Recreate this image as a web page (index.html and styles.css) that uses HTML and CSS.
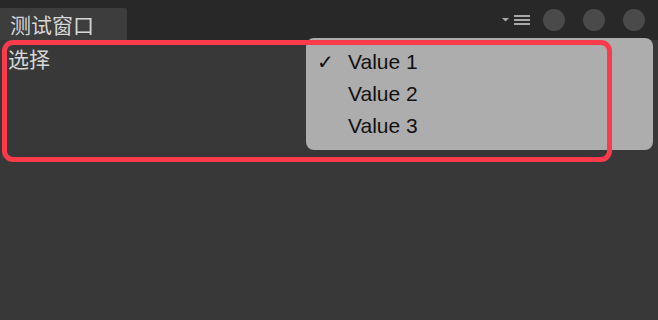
FILE: index.html
```html
<!DOCTYPE html>
<html lang="zh">
<head>
    <meta charset="UTF-8">
    <title>测试窗口</title>
    <link rel="stylesheet" href="styles.css">
</head>
<body>
    <div class="window">
        <div class="titlebar">
            <div class="tab">测试窗口</div>
            <div class="tools">
                <svg class="menu-icon" width="30" height="12" viewBox="0 0 30 12">
                    <polygon points="0,4 7,4 3.5,7.5" fill="#a8a8a8"/>
                    <rect x="12" y="1" width="16" height="2" fill="#a8a8a8"/>
                    <rect x="12" y="5" width="16" height="2" fill="#a8a8a8"/>
                    <rect x="12" y="9" width="16" height="2" fill="#a8a8a8"/>
                </svg>
                <span class="dot"></span>
                <span class="dot"></span>
                <span class="dot"></span>
            </div>
        </div>
        <div class="content">
            <div class="label">选择</div>
            <ul class="popup">
                <li class="checked"><span class="check">✓</span>Value 1</li>
                <li><span class="check"></span>Value 2</li>
                <li><span class="check"></span>Value 3</li>
            </ul>
            <!-- annotation box -->
            <div class="highlight"></div>
        </div>
    </div>
</body>
</html>
```

FILE: styles.css
```css
body {
    margin: 0;
    background-color: #383838;
    font-family: "Noto Sans CJK SC", "Liberation Sans", sans-serif;
    overflow: hidden;
}

.window {
    width: 658px;
    height: 320px;
}

.titlebar {
    height: 40px;
    background-color: #282828;
    display: flex;
    align-items: flex-end;
    justify-content: space-between;
}

.tab {
    width: 117px;
    height: 32px;
    padding-left: 10px;
    background-color: #3d3d3d;
    border-top-right-radius: 3px;
    color: #d6d6d6;
    font-size: 21px;
    line-height: 32px;
}

.tools {
    align-self: center;
    display: flex;
    align-items: center;
    gap: 18px;
    padding-right: 13px;
    margin-top: -1px;
}

.menu-icon {
    margin-right: -7px;
}

.dot {
    width: 22px;
    height: 22px;
    border-radius: 50%;
    background-color: #4a4a4a;
}

.content {
    position: relative;
    height: 280px;
}

.label {
    padding: 5px 0 0 8px;
    color: #d6d6d6;
    font-size: 21px;
    line-height: 26px;
}

.popup {
    position: absolute;
    left: 306px;
    top: -2px;
    width: 347px;
    height: 112px;
    margin: 0;
    padding: 8px 0 0 0;
    box-sizing: border-box;
    list-style: none;
    background-color: #adadad;
    border-radius: 8px;
    font-family: "Liberation Sans", sans-serif;
    font-size: 21px;
    color: #111;
}

.popup li {
    height: 32px;
    line-height: 32px;
    display: flex;
}

.check {
    width: 42px;
    padding-left: 11px;
    box-sizing: border-box;
    font-family: "DejaVu Sans", sans-serif;
    font-size: 20px;
}

.highlight {
    position: absolute;
    left: 2px;
    top: 0;
    width: 600px;
    height: 112px;
    border: 5px solid #fb3a4b;
    border-radius: 11px;
}
```
